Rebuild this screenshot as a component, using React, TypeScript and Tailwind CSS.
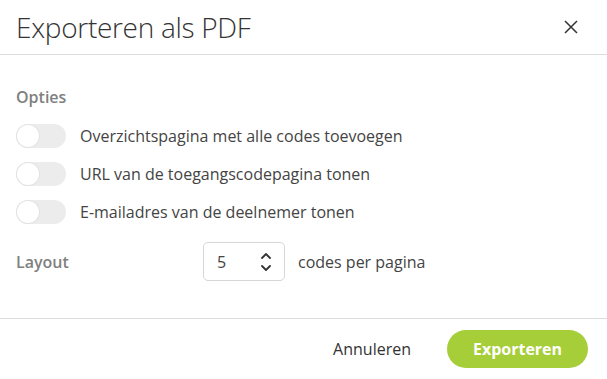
import { useState } from "react";

function Toggle() {
  const [on, setOn] = useState(false);
  return (
    <button
      onClick={() => setOn(!on)}
      className={`relative h-6 w-[50px] shrink-0 rounded-full ${on ? "bg-[#a6ce39]" : "bg-[#ececec]"}`}
    >
      <span
        className={`absolute top-px h-[22px] w-[22px] rounded-full bg-white shadow-[0_0_0_1px_#e2e2e2] ${on ? "left-[27px]" : "left-px"}`}
      />
    </button>
  );
}

const options = [
  "Overzichtspagina met alle codes toevoegen",
  "URL van de toegangscodepagina tonen",
  "E-mailadres van de deelnemer tonen",
];

export default function App() {
  return (
    <div className="flex h-[379px] w-[607px] flex-col bg-white font-['Open_Sans',sans-serif] text-[#444]">
      {/* header */}
      <div className="flex h-[55px] items-center justify-between border-b border-[#dcdcdc] pl-4 pr-[29px]">
        <h1 className="text-[28px] font-light tracking-[-0.3px] text-[#333]">Exporteren als PDF</h1>
        <button className="text-[#333]">
          <svg width="14" height="14" viewBox="0 0 14 14" stroke="currentColor" strokeWidth="1.5">
            <path d="M1 1l12 12M13 1L1 13" />
          </svg>
        </button>
      </div>

      {/* body */}
      <div className="flex-1 px-4 pt-[30px]">
        <div className="text-base font-semibold text-[#808080]">Opties</div>
        <div className="mt-[15px] flex flex-col gap-[14px]">
          {options.map((o) => (
            <div key={o} className="flex items-center gap-[14px]">
              <Toggle />
              <span className="text-base leading-6">{o}</span>
            </div>
          ))}
        </div>
        <div className="mt-[18px] flex items-center">
          <div className="w-[187px] text-base font-semibold text-[#808080]">Layout</div>
          <div className="flex h-[39px] w-[82px] items-center justify-between rounded-[5px] border border-[#d6d6d6] pl-[13px] pr-[12px]">
            <span className="text-base">5</span>
            <svg width="12" height="22" viewBox="0 0 12 22" fill="none" stroke="#333" strokeWidth="1.8" strokeLinecap="round" strokeLinejoin="round">
              <path d="M2 7l4-4 4 4M2 15l4 4 4-4" />
            </svg>
          </div>
          <span className="ml-[13px] text-base">codes per pagina</span>
        </div>
      </div>

      {/* footer */}
      <div className="flex h-[61px] items-center justify-end gap-[36px] border-t border-[#dcdcdc] pr-[19px]">
        <button className="text-base text-[#333]">Annuleren</button>
        <button className="h-[38px] w-[141px] rounded-full bg-[#a6ce39] text-base font-bold text-white">
          Exporteren
        </button>
      </div>
    </div>
  );
}
